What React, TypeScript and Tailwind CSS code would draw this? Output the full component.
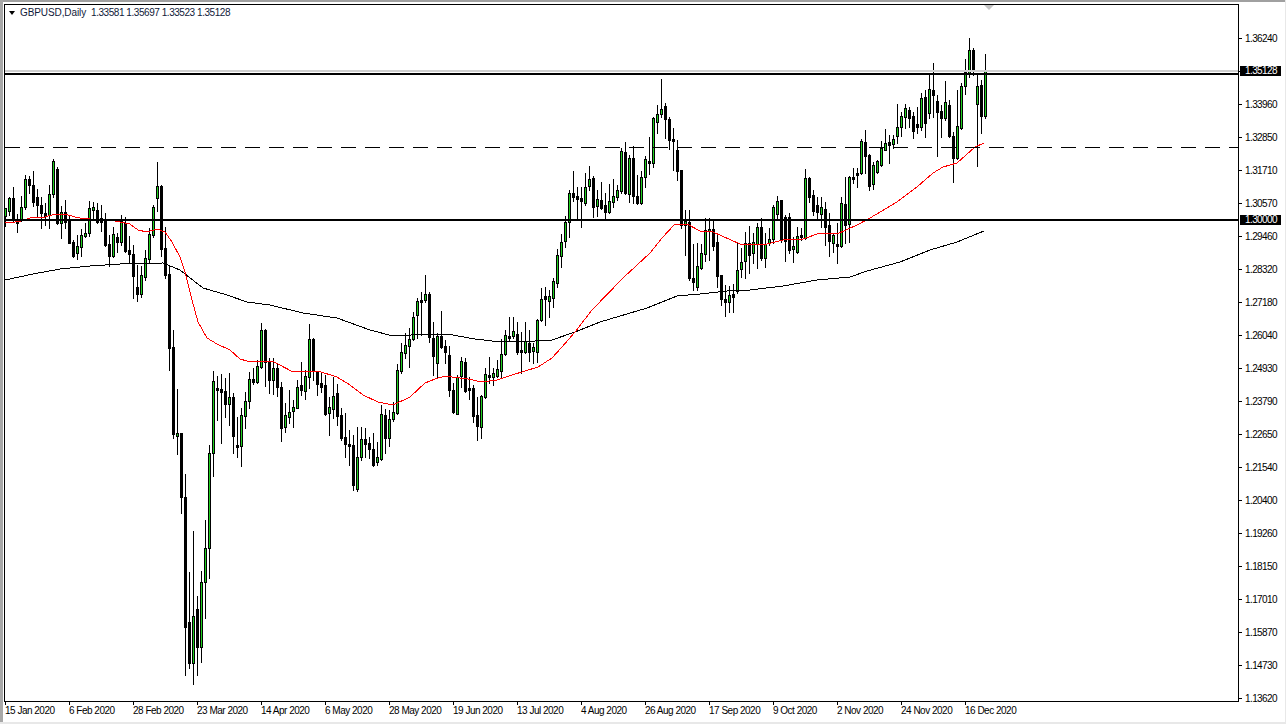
const font = "font-['Liberation_Sans',Arial,sans-serif]"

// high, body top, body bottom, low, 1 = bull. first bar sits at x=5, then one every 4px
const candles: number[][] = [
  [208,208,216,226,1],[197,198,211,215,1],[187,198,220,222,0],[214,219,223,232,0],[196,207,220,221,1],[175,179,207,209,1],
  [176,179,185,193,0],[171,185,202,206,0],[189,197,205,217,0],[197,205,213,228,0],[203,213,216,225,0],[185,194,215,228,1],
  [159,161,194,197,1],[167,169,223,224,0],[206,212,223,238,1],[200,212,222,228,0],[215,219,243,243,0],[240,242,256,257,0],
  [235,246,253,259,1],[229,235,247,256,1],[223,233,236,237,1],[201,208,233,236,1],[202,207,210,220,1],[203,210,222,223,0],
  [205,218,222,231,0],[213,220,245,246,0],[235,244,256,266,0],[227,234,256,257,1],[233,237,242,252,0],[215,221,242,245,1],
  [217,223,251,252,0],[236,250,254,262,0],[245,254,276,298,0],[265,287,294,301,0],[266,275,294,297,1],[250,258,277,280,1],
  [228,234,259,262,1],[205,207,235,237,1],[162,186,198,211,1],[185,186,249,256,0],[227,248,275,278,0],[265,274,348,370,0],
  [330,347,434,438,0],[389,433,436,454,1],[433,433,497,513,0],[474,497,627,675,0],[572,622,663,668,0],[531,616,663,684,1],
  [596,609,647,675,0],[571,582,647,662,1],[520,548,582,618,1],[445,453,548,578,1],[371,381,453,476,1],[376,388,390,420,0],
  [374,389,392,443,0],[378,391,404,417,0],[373,397,404,425,1],[393,397,436,453,0],[417,445,447,457,0],[408,415,446,466,1],
  [392,401,416,428,1],[372,379,401,408,1],[368,379,382,384,0],[360,366,382,383,1],[323,330,367,368,1],[329,330,362,386,0],
  [358,362,380,393,0],[358,368,380,394,1],[364,368,387,396,0],[382,387,428,441,0],[403,415,427,432,1],[390,412,417,423,1],
  [400,407,411,427,1],[380,387,408,408,1],[362,385,390,395,0],[370,376,391,399,1],[324,339,377,388,1],[338,339,371,380,0],
  [371,372,384,395,0],[372,383,387,392,0],[375,385,414,415,0],[397,407,413,435,1],[377,396,409,418,1],[384,393,416,425,0],
  [408,415,438,440,0],[413,437,444,457,0],[430,444,446,465,0],[435,445,485,490,0],[427,457,489,491,1],[427,439,457,460,1],
  [428,439,444,457,0],[437,443,449,458,0],[433,449,465,466,0],[442,457,462,465,1],[405,414,459,460,1],[409,415,438,453,0],
  [410,419,438,446,1],[402,412,419,421,1],[364,370,413,414,1],[343,352,371,373,1],[333,345,353,358,1],[328,339,346,367,1],
  [312,317,339,340,1],[298,301,315,338,1],[292,300,302,335,0],[275,294,300,302,1],[292,294,337,342,0],[322,338,356,375,0],
  [333,336,363,378,1],[311,336,347,348,0],[340,346,352,363,0],[346,355,390,396,0],[383,390,412,413,0],[375,377,414,414,1],
  [357,361,376,387,1],[358,362,391,392,0],[377,388,390,399,0],[385,388,416,422,0],[397,415,426,440,0],[395,396,427,438,1],
  [368,374,397,398,1],[357,375,377,383,0],[368,373,377,385,1],[360,369,376,377,1],[339,354,371,378,1],[330,335,354,355,1],
  [317,336,338,340,0],[317,331,336,338,1],[322,334,352,354,0],[332,350,352,373,0],[322,341,352,353,1],[330,343,352,361,0],
  [343,347,351,363,1],[319,320,352,362,1],[288,299,320,321,1],[287,296,299,325,0],[290,296,301,317,1],[278,281,298,307,1],
  [249,255,283,287,1],[234,242,256,267,1],[216,222,241,247,1],[190,193,222,237,1],[171,193,197,201,0],[187,196,199,219,0],
  [187,198,201,227,0],[173,187,203,205,1],[166,179,186,190,1],[176,178,207,217,0],[190,199,206,216,1],[182,200,208,209,0],
  [193,205,212,219,0],[184,201,212,213,1],[179,196,202,207,1],[185,190,197,200,1],[148,151,191,193,1],[142,152,193,194,0],
  [155,158,194,202,1],[146,158,196,203,0],[175,196,203,204,0],[171,177,203,204,1],[156,159,177,187,1],[137,161,163,174,0],
  [117,118,163,167,1],[105,114,122,133,1],[79,109,114,117,1],[103,106,119,138,0],[117,119,140,149,0],[128,139,141,170,0],
  [140,150,171,180,0],[170,170,225,228,0],[210,221,225,255,1],[210,222,278,280,0],[244,278,282,290,0],[243,266,287,290,1],
  [244,253,268,269,1],[218,230,254,261,1],[218,229,231,260,1],[220,229,246,250,0],[233,242,276,287,0],[275,275,299,305,0],
  [285,299,302,316,0],[286,295,302,312,1],[284,294,297,312,0],[242,270,291,293,1],[248,262,269,277,1],[232,243,261,278,1],
  [226,243,255,273,0],[233,242,253,263,1],[223,227,244,268,1],[218,227,258,260,0],[233,244,258,267,1],[228,239,243,245,1],
  [205,207,239,243,1],[196,201,214,220,1],[200,200,240,242,0],[215,217,241,261,0],[213,217,250,253,0],[237,246,249,262,1],
  [227,236,252,253,1],[228,235,237,240,0],[169,178,238,239,1],[177,178,197,202,0],[190,195,211,215,0],[197,205,212,220,0],
  [197,207,214,227,1],[202,209,227,245,0],[213,225,241,256,0],[233,235,243,252,1],[223,244,246,263,0],[197,203,246,247,1],
  [177,204,225,243,0],[176,177,224,242,1],[168,177,179,183,0],[168,173,175,187,0],[139,141,173,174,1],[130,142,156,173,0],
  [154,155,186,190,0],[162,165,184,189,1],[160,161,172,173,1],[141,148,165,166,1],[129,143,150,150,1],[135,142,145,163,0],
  [135,139,144,148,1],[104,127,136,143,1],[112,116,127,136,1],[104,108,117,128,1],[107,110,118,127,0],[112,116,131,138,0],
  [107,124,127,133,0],[93,98,127,130,1],[90,97,123,137,0],[74,89,113,118,1],[63,90,95,117,0],[95,101,112,156,0],
  [105,111,118,137,0],[81,102,118,120,1],[100,105,136,137,0],[132,136,158,182,0],[90,126,158,159,1],[83,86,128,129,1],
  [59,72,86,94,1],[38,50,73,77,1],[48,50,71,75,0],[75,86,104,166,1],[80,85,116,133,0],[54,70,116,118,1],
]

const ma50 = "5,222 15,222 21,221 30,218 45,217 55,214 65,214 75,217 80,218 90,219 105,219 115,221 130,224 138,230 147,232 157,229 165,232 172,242 180,257 185,272 192,300 198,322 207,338 217,344 230,350 240,359 247,361 258,362 272,361 278,364 293,372 318,371 337,377 350,385 363,395 378,402 393,405 410,397 425,383 435,379 445,376 452,377 468,379 482,382 497,380 512,375 525,371 538,367 552,358 562,347 575,332 592,310 623,278 650,253 662,238 675,224 687,224 700,231 713,232 740,244 767,244 783,240 803,239 820,233 837,234 857,225 870,218 897,202 917,187 933,173 943,167 957,163 975,147 984,143"
const ma200 = "5,280 33,274 60,269 90,266 120,264 163,263 180,270 203,288 227,295 247,302 270,305 303,313 337,318 370,330 393,336 430,334 447,334 475,339 492,341 535,341 552,340 575,332 600,322 647,308 677,296 700,294 727,291 750,290 783,286 817,280 850,277 867,271 900,262 930,250 957,242 984,231"

const prices = ["1.36240","1.35128","1.33960","1.32850","1.31710","1.30570","1.29460","1.28320","1.27180","1.26040","1.24930","1.23790","1.22650","1.21540","1.20400","1.19260","1.18150","1.17010","1.15870","1.14730","1.13620"]
const dates = ["15 Jan 2020","6 Feb 2020","28 Feb 2020","23 Mar 2020","14 Apr 2020","6 May 2020","28 May 2020","19 Jun 2020","13 Jul 2020","4 Aug 2020","26 Aug 2020","17 Sep 2020","9 Oct 2020","2 Nov 2020","24 Nov 2020","16 Dec 2020"]

function Chart() {
  return (
    <svg viewBox="5 5 1233 696" className="block h-[696px] w-[1233px]" shapeRendering="crispEdges">
      {candles.map((c, i) => {
        const x = 5 + i * 4
        return (
          <g key={i}>
            <rect x={x} y={c[0]} width={1} height={c[3] - c[0] + 1} fill="#000" />
            <rect x={x - 1} y={c[1]} width={3} height={c[2] - c[1] + 1} fill="#000" />
            {c[4] === 1 && c[2] - c[1] > 1 && <rect x={x} y={c[1] + 1} width={1} height={c[2] - c[1] - 1} fill="#1fd01f" />}
          </g>
        )
      })}
      <polyline points={ma200} fill="none" stroke="#000" strokeWidth={1} />
      <polyline points={ma50} fill="none" stroke="#f00" strokeWidth={1} />
      <rect x={5} y={70} width={1233} height={2} fill="#cfcfcf" />
      <rect x={5} y={73} width={1233} height={2} fill="#000" />
      <rect x={5} y={219} width={1233} height={2} fill="#000" />
      <line x1={5} x2={1238} y1={147.5} y2={147.5} stroke="#000" strokeDasharray="15 9" />
    </svg>
  )
}

export default function App() {
  return (
    <div className={`${font} flex h-[724px] w-[1286px] flex-col overflow-hidden bg-white pl-[4px] pt-[4px] text-[10px] leading-none text-black relative`}>
      {/* window edges */}
      <div className="absolute inset-x-0 top-0 h-[2px] bg-[#a0a0a0]" />
      <div className="absolute inset-y-0 left-0 w-[3px] bg-[#a8a8a8]" />
      <div className="absolute inset-x-0 bottom-0 h-[2px] bg-[#e8e8e8]" />
      <div className="absolute inset-y-0 right-0 w-[1px] bg-[#e8e8e8]" />

      <div className="flex h-[698px]">
        <div className="relative h-[698px] w-[1235px] shrink-0 border border-black">
          <Chart />
          <div className="absolute left-[4px] top-[3px] flex items-center gap-[5px] whitespace-pre text-[#10203a]">
            <span className="h-0 w-0 border-x-[3.5px] border-t-[4px] border-x-transparent border-t-black" />
            <span className="tracking-[-0.1px]">GBPUSD,Daily</span>
            <span className="tracking-[-0.45px]">1.33581 1.35697 1.33523 1.35128</span>
          </div>
          <span className="absolute right-[244px] top-0 h-0 w-0 border-x-[5px] border-t-[5px] border-x-transparent border-t-[#c4c4c4]" />
        </div>
        {/* price axis */}
        <div className="relative flex h-[698px] w-[47px] flex-col pt-[18px]">
          {prices.map((p, i) => (
            <div key={p} className="flex h-[33px] shrink-0 items-center">
              <span className="h-px w-[3px] bg-black" />
              {i === 1 ? (
                <span className="ml-[-2px] mt-[-1px] flex h-[10px] w-[41px] items-center bg-black pl-[5px] tracking-[-0.6px] text-white">{p}</span>
              ) : (
                <span className="ml-[3px] tracking-[-0.6px]">{p}</span>
              )}
            </div>
          ))}
          <span className="absolute left-px top-[211px] flex h-[10px] w-[41px] items-center bg-black pl-[5px] tracking-[-0.6px] text-white">1.30000</span>
        </div>
      </div>

      {/* time axis */}
      <div className="flex">
        {dates.map(d => (
          <div key={d} className="w-16 shrink-0 pl-px">
            <div className="h-[3px] w-px bg-black" />
            <div className="mt-px whitespace-nowrap tracking-[-0.5px]">{d}</div>
          </div>
        ))}
      </div>
    </div>
  )
}
